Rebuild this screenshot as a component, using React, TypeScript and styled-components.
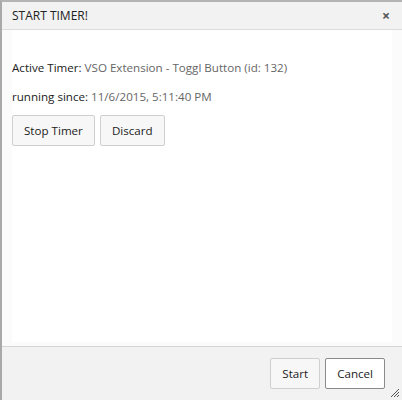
import React from "react";
import styled, { createGlobalStyle } from "styled-components";

const Global = createGlobalStyle`
  html, body { margin: 0; padding: 0; background: #ffffff; }
  body { font-family: "Open Sans", "Noto Sans", sans-serif; }
`;

const Dialog = styled.div`
  box-sizing: border-box;
  width: 402px;
  height: 400px;
  border-left: 2px solid #a9a9a9;
  border-top: 2px solid #b4b4b4;
  display: flex;
  flex-direction: column;
  background: #f2f2f2;
`;

const TitleBar = styled.div`
  box-sizing: border-box;
  height: 28px;
  flex: none;
  display: flex;
  align-items: center;
  justify-content: space-between;
  padding: 0 10px 0 10px;
  background: #f2f2f2;
  border-bottom: 1px solid #dcdcdc;
`;

const Title = styled.span`
  font-size: 12px;
  color: #222;
`;

const Close = styled.span`
  font-size: 14px;
  font-weight: bold;
  color: #555;
  line-height: 1;
  margin-right: 2px;
`;

const Content = styled.div`
  flex: 1;
  background: #fbfbfb;
  padding: 0 10px 4px 10px;
  display: flex;
  border-bottom: 1px solid #d4d4d4;
`;

const Inner = styled.div`
  flex: 1;
  background: #ffffff;
  padding-top: 30px;
  display: flex;
  flex-direction: column;
`;

const Line = styled.div`
  font-size: 11.6px;
  color: #222;
  line-height: 16px;
  margin-bottom: 13px;
`;

const Value = styled.span`
  color: #666;
`;

const Buttons = styled.div`
  display: flex;
  gap: 5px;
  margin-top: -3px;
`;

const Button = styled.button<{ $focused?: boolean }>`
  box-sizing: border-box;
  height: 31px;
  padding: 0 11px;
  font-family: "Open Sans", "Noto Sans", sans-serif;
  font-size: 11.6px;
  color: #222;
  background: ${(p) => (p.$focused ? "#ffffff" : "#f7f7f7")};
  border: 1px solid ${(p) => (p.$focused ? "#8a8a8a" : "#cfcfcf")};
  border-radius: 2px;
`;

const Footer = styled.div`
  height: 53px;
  flex: none;
  display: flex;
  align-items: flex-start;
  justify-content: flex-end;
  gap: 5px;
  padding: 11px 17px 0 0;
  box-sizing: border-box;
  position: relative;
`;

const Grip = styled.svg`
  position: absolute;
  right: 2px;
  bottom: 2px;
`;

export default function App() {
  return (
    <>
      <Global />
      <Dialog>
        <TitleBar>
          <Title>START TIMER!</Title>
          <Close>×</Close>
        </TitleBar>
        <Content>
          <Inner>
            <Line>
              Active Timer: <Value>VSO Extension - Toggl Button (id: 132)</Value>
            </Line>
            <Line>
              running since: <Value>11/6/2015, 5:11:40 PM</Value>
            </Line>
            <Buttons>
              <Button>Stop Timer</Button>
              <Button>Discard</Button>
            </Buttons>
          </Inner>
        </Content>
        <Footer>
          <Button>Start</Button>
          <Button $focused>Cancel</Button>
          <Grip width="10" height="10" viewBox="0 0 10 10">
            <path d="M9 1L1 9M9 4L4 9M9 7L7 9" stroke="#555" strokeWidth="1" />
          </Grip>
        </Footer>
      </Dialog>
    </>
  );
}
